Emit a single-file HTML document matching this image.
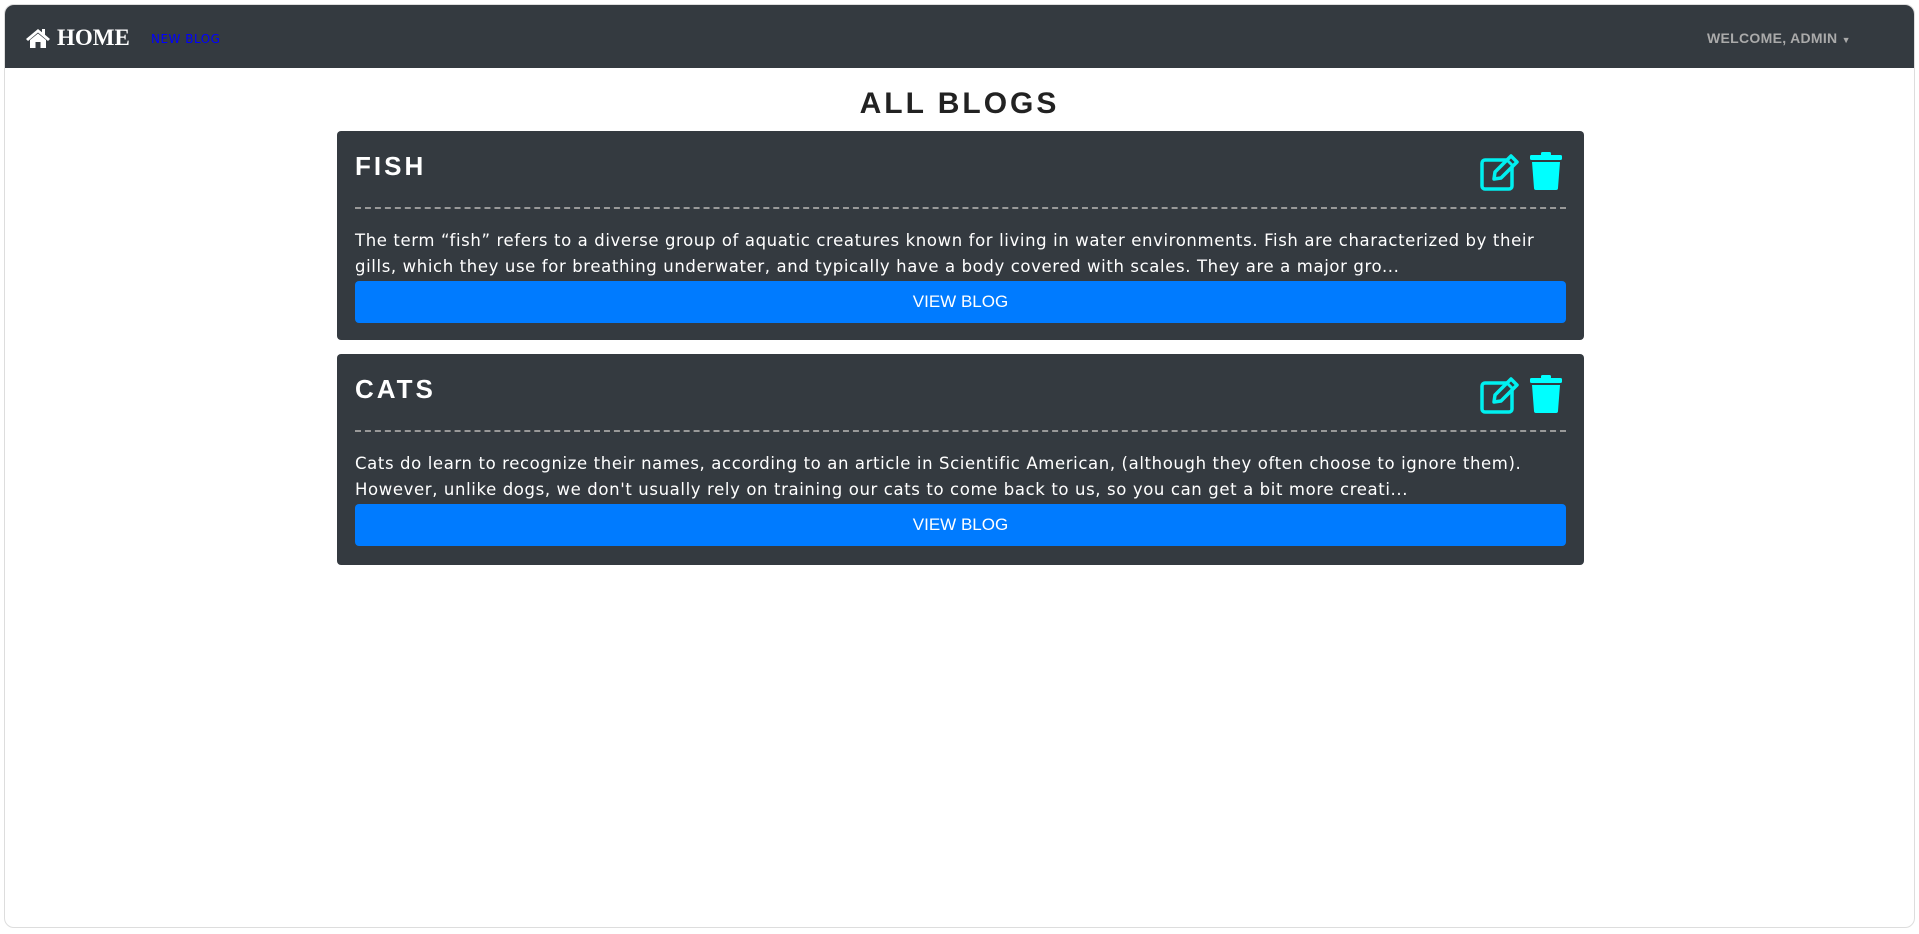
<!DOCTYPE html>
<html><head><style>
html,body{margin:0;padding:0;background:#fff;width:1919px;height:934px;overflow:hidden;font-family:"Liberation Sans",sans-serif}
.frame{position:absolute;left:4px;top:4px;width:1909px;height:922px;border:1px solid #ddd;border-radius:10px;overflow:hidden;background:#fff}
.nav{position:absolute;left:0;top:0;right:0;height:63px;background:#343a40}
.home{position:absolute;left:20px;top:20px;color:#fff;font:bold 23px "Liberation Serif",serif;display:flex;align-items:center;gap:6px}
.newb{position:absolute;left:146px;top:27px;color:#0000ff;font-family:"DejaVu Sans",sans-serif;font-size:12px;letter-spacing:.5px}
.welc{position:absolute;left:1702px;top:25px;color:#aaa;font-size:14px;font-weight:bold;letter-spacing:.3px}
h1{position:absolute;left:0;right:0;top:82px;margin:0;text-align:center;font-size:30px;letter-spacing:3px;color:#222}
.card{position:absolute;left:332px;width:1247px;background:#343a40;border-radius:4px}
.ct{position:absolute;left:18px;top:20px;color:#fff;font-size:26px;font-weight:bold;letter-spacing:3px}
.hr{position:absolute;left:18px;right:18px;top:76px;border-top:2px dashed #999}
.txt{position:absolute;left:18px;right:18px;top:97px;color:#fff;font-family:"DejaVu Sans",sans-serif;font-size:16.5px;letter-spacing:.62px;line-height:26px}
.btn{position:absolute;left:18px;right:18px;top:150px;height:42px;background:#007bff;border-radius:4px;color:#fff;font-size:17px;text-align:center;line-height:42px}
.ic{position:absolute;top:21px;left:1143px}
</style></head><body>
<div class="frame">
<div class="nav">
<div class="home"><svg width="26" height="22" viewBox="0 0 26 22"><path d="M13 2 L1 12 L3 14 L13 5.5 L23 14 L25 12 L20 7.8 V2 H17 V5.3 Z" fill="#fff"/><path d="M5 13 L13 6.5 L21 13 V21 H15.5 V15 H10.5 V21 H5 Z" fill="#fff"/></svg>HOME</div>
<div class="newb">NEW BLOG</div>
<div class="welc">WELCOME, ADMIN <span style="font-size:9px">▼</span></div>
</div>
<h1>ALL BLOGS</h1>
<div class="card" style="top:126px;height:209px">
<div class="ct">FISH</div>
<svg class="ic" width="90" height="40" viewBox="0 0 90 40"><rect x="2" y="8" width="30" height="29" rx="3" fill="none" stroke="#00f0f0" stroke-width="3.5"/><path d="M14 27 L15 20 L31 4 L37 10 L21 26 Z" fill="#343a40" stroke="#00f0f0" stroke-width="3.5" stroke-linejoin="round"/><path d="M27 8 L33 14" stroke="#00f0f0" stroke-width="3"/><rect x="50" y="3" width="32" height="5" rx="1.5" fill="#00ffff"/><rect x="61" y="0" width="10" height="4" rx="1.5" fill="#00ffff"/><path d="M52 10 H80 L78 36 Q78 38 76 38 H56 Q54 38 54 36 Z" fill="#00ffff"/></svg>
<div class="hr"></div>
<div class="txt">The term “fish” refers to a diverse group of aquatic creatures known for living in water environments. Fish are characterized by their gills, which they use for breathing underwater, and typically have a body covered with scales. They are a major gro...</div>
<div class="btn">VIEW BLOG</div>
</div>
<div class="card" style="top:349px;height:211px">
<div class="ct">CATS</div>
<svg class="ic" width="90" height="40" viewBox="0 0 90 40"><rect x="2" y="8" width="30" height="29" rx="3" fill="none" stroke="#00f0f0" stroke-width="3.5"/><path d="M14 27 L15 20 L31 4 L37 10 L21 26 Z" fill="#343a40" stroke="#00f0f0" stroke-width="3.5" stroke-linejoin="round"/><path d="M27 8 L33 14" stroke="#00f0f0" stroke-width="3"/><rect x="50" y="3" width="32" height="5" rx="1.5" fill="#00ffff"/><rect x="61" y="0" width="10" height="4" rx="1.5" fill="#00ffff"/><path d="M52 10 H80 L78 36 Q78 38 76 38 H56 Q54 38 54 36 Z" fill="#00ffff"/></svg>
<div class="hr"></div>
<div class="txt">Cats do learn to recognize their names, according to an article in Scientific American, (although they often choose to ignore them). However, unlike dogs, we don't usually rely on training our cats to come back to us, so you can get a bit more creati...</div>
<div class="btn">VIEW BLOG</div>
</div>
</div>
</body></html>
